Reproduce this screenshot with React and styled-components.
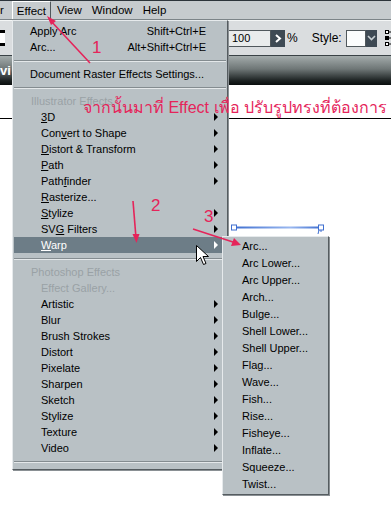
import React from "react";
import styled, { createGlobalStyle } from "styled-components";

const GlobalStyle = createGlobalStyle`
  html, body {
    margin: 0;
    padding: 0;
    background: #ffffff;
  }
  body {
    font-family: "Liberation Sans", Arial, sans-serif;
  }
`;

const Page = styled.div`
  position: relative;
  width: 391px;
  height: 513px;
  overflow: hidden;
  background: #ffffff;
  display: flex;
  flex-direction: column;
`;

const MenuBar = styled.div`
  height: 18px;
  border-top: 1px solid #2c343a;
  border-bottom: 1px solid #7c8488;
  background: #c6cbce;
  display: flex;
  align-items: center;
  font-size: 11.5px;
  color: #000;
`;

const MenuBarItem = styled.div`
  height: 18px;
  display: flex;
  align-items: center;
  padding: 0 ${(p) => (p.active ? 4 : 0)}px;
  margin-left: ${(p) => p.ml || 0}px;
  box-sizing: border-box;
  border: ${(p) => (p.active ? "1px solid #ffffff" : "none")};
  border-right-color: #50585c;
  border-bottom: none;
`;

const Toolbar = styled.div`
  height: 34px;
  background: #dadddf;
  border-top: 1px solid #f4f6f6;
  border-bottom: 1px solid #3a4246;
  display: flex;
  align-items: center;
  font-size: 12px;
`;

const Swatch = styled.div`
  width: 10px;
  height: 16px;
  background: #000;
  display: flex;
  align-items: center;
  justify-content: flex-end;
  &::after {
    content: "";
    width: 5px;
    height: 10px;
    background: #fff;
  }
`;

const Controls = styled.div`
  margin-left: 222px;
  display: flex;
  align-items: center;
`;

const NumberBox = styled.div`
  width: 44px;
  height: 17px;
  box-sizing: border-box;
  border: 1px solid #50585c;
  background: #e9ecec;
  font-size: 11px;
  padding-left: 4px;
  display: flex;
  align-items: center;
`;

const DarkButton = styled.div`
  width: ${(p) => p.w}px;
  height: 17px;
  background: #3e4a54;
  display: flex;
  align-items: center;
  justify-content: center;
`;

const Label = styled.span`
  margin-left: ${(p) => p.ml}px;
  font-size: 12px;
`;

const WhiteBox = styled.div`
  margin-left: 4px;
  width: 20px;
  height: 17px;
  box-sizing: border-box;
  border: 1px solid #50585c;
  background: #fbfdfd;
`;

const ChainIcon = styled.svg`
  margin-left: 8px;
`;

const Band = styled.div`
  height: 29px;
  background: linear-gradient(#a4acac 0%, #6e7676 45%, #1c2222 85%, #0a0e0e 100%);
  display: flex;
  align-items: center;
  color: #fff;
  font-weight: bold;
  font-size: 13px;
`;

const Canvas = styled.div`
  flex: 1;
  background: #fff;
  padding-top: 33px;
`;

const Rule = styled.div`
  height: 1px;
  background: #000;
`;

/* menu */

const Menu = styled.div`
  position: absolute;
  left: 12px;
  top: 20px;
  width: 216px;
  box-sizing: border-box;
  background: #b9c1c5;
  border: 1px solid;
  border-color: #e6eaec #555c60 #555c60 #e6eaec;
  box-shadow: 1px 1px 0 #8a9094;
  padding: 2px 1px 2px;
  font-size: 11px;
  color: #000;
  display: flex;
  flex-direction: column;
`;

const SubMenu = styled(Menu)`
  left: 222px;
  top: 236px;
  width: 107px;
  padding: 0 1px 2px;
`;

const Row = styled.div`
  height: ${(p) => p.h || 16}px;
  display: flex;
  align-items: center;
  padding-left: ${(p) => p.indent}px;
  padding-right: 8px;
  background: ${(p) => (p.hot ? "#6d7d87" : "transparent")};
  color: ${(p) => (p.hot ? "#fff" : p.disabled ? "#99a1a5" : "#000")};
  white-space: nowrap;
`;

const ItemText = styled.span`
  flex: 1;
  u {
    text-decoration: underline;
    text-underline-offset: 1px;
  }
`;

const Shortcut = styled.span`
  margin-right: 12px;
`;

const Arrow = styled.span`
  width: 0;
  height: 0;
  border-top: 4px solid transparent;
  border-bottom: 4px solid transparent;
  border-left: 4px solid ${(p) => (p.hot ? "#fff" : "#000")};
`;

const Separator = styled.div`
  height: 11px;
  display: flex;
  align-items: center;
  &::after {
    content: "";
    flex: 1;
    height: 1px;
    background: #848c90;
    border-bottom: 1px solid #e4e8ea;
  }
`;

const Overlay = styled.svg`
  position: absolute;
  left: 0;
  top: 0;
  pointer-events: none;
`;

const Note = styled.div`
  position: absolute;
  left: ${(p) => p.x}px;
  top: ${(p) => p.y}px;
  color: #e5245a;
  font-family: "Liberation Sans", "DejaVu Sans", sans-serif;
  font-size: ${(p) => p.size || 16}px;
  white-space: nowrap;
`;

const illustrator = [
  [<><u>3</u>D</>, true],
  [<>Con<u>v</u>ert to Shape</>, true],
  [<><u>D</u>istort &amp; Transform</>, true],
  [<><u>P</u>ath</>, true],
  [<>Path<u>f</u>inder</>, true],
  [<><u>R</u>asterize...</>, false],
  [<><u>S</u>tylize</>, true],
  [<>SV<u>G</u> Filters</>, true],
];

const photoshop = [
  "Artistic",
  "Blur",
  "Brush Strokes",
  "Distort",
  "Pixelate",
  "Sharpen",
  "Sketch",
  "Stylize",
  "Texture",
  "Video",
];

const warps = [
  "Arc...",
  "Arc Lower...",
  "Arc Upper...",
  "Arch...",
  "Bulge...",
  "Shell Lower...",
  "Shell Upper...",
  "Flag...",
  "Wave...",
  "Fish...",
  "Rise...",
  "Fisheye...",
  "Inflate...",
  "Squeeze...",
  "Twist...",
];

const App = () => {
  return (
    <Page>
      <GlobalStyle />
      <MenuBar>
        <MenuBarItem>r</MenuBarItem>
        <MenuBarItem ml={8} active>
          Effect
        </MenuBarItem>
        <MenuBarItem ml={6}>View</MenuBarItem>
        <MenuBarItem ml={10}>Window</MenuBarItem>
        <MenuBarItem ml={10}>Help</MenuBarItem>
      </MenuBar>
      <Toolbar>
        <Swatch />
        <Controls>
          <NumberBox>100</NumberBox>
          <DarkButton w={14}>
            <svg width="8" height="9" viewBox="0 0 8 9">
              <path d="M2 1 L6 4.5 L2 8" stroke="#fff" strokeWidth="2" fill="none" />
            </svg>
          </DarkButton>
          <Label ml={2}>%</Label>
          <Label ml={14}>Style:</Label>
          <WhiteBox />
          <DarkButton w={11}>
            <svg width="9" height="6" viewBox="0 0 9 6">
              <path d="M1 1 L4.5 4.5 L8 1" stroke="#c8d0d4" strokeWidth="1.6" fill="none" />
            </svg>
          </DarkButton>
          <ChainIcon width="8" height="18" viewBox="0 0 8 18">
            <rect x="0.5" y="1.5" width="3" height="3" fill="#fff" stroke="#000" />
            <rect x="0.5" y="7.5" width="3" height="3" fill="#000" stroke="#000" />
            <rect x="0.5" y="13.5" width="3" height="3" fill="#fff" stroke="#000" />
            <path d="M3.5 3 H7 M3.5 9 H7 M3.5 15 H7" stroke="#000" />
          </ChainIcon>
        </Controls>
      </Toolbar>
      <Band>vi</Band>
      <Canvas>
        <Rule />
      </Canvas>

      <Menu>
        <Row indent={16}>
          <ItemText>Apply Arc</ItemText>
          <Shortcut>Shift+Ctrl+E</Shortcut>
        </Row>
        <Row indent={16}>
          <ItemText>Arc...</ItemText>
          <Shortcut>Alt+Shift+Ctrl+E</Shortcut>
        </Row>
        <Separator />
        <Row indent={16}>
          <ItemText>Document Raster Effects Settings...</ItemText>
        </Row>
        <Separator />
        <Row indent={17} disabled>
          <ItemText>Illustrator Effects</ItemText>
        </Row>
        {illustrator.map(([label, sub], i) => (
          <Row key={i} indent={27}>
            <ItemText>{label}</ItemText>
            {sub && <Arrow />}
          </Row>
        ))}
        <Row indent={27} hot>
          <ItemText>
            <u>W</u>arp
          </ItemText>
          <Arrow hot />
        </Row>
        <Separator />
        <Row indent={17} disabled>
          <ItemText>Photoshop Effects</ItemText>
        </Row>
        <Row indent={27} disabled>
          <ItemText>Effect Gallery...</ItemText>
        </Row>
        {photoshop.map((label) => (
          <Row key={label} indent={27}>
            <ItemText>{label}</ItemText>
            <Arrow />
          </Row>
        ))}
        <Separator />
      </Menu>

      <SubMenu>
        {warps.map((label) => (
          <Row key={label} indent={18} h={17}>
            <ItemText>{label}</ItemText>
          </Row>
        ))}
      </SubMenu>

      <Note x={83} y={95} size={16}>
        จากนั้นมาที่ Effect เพื่อ ปรับรูปทรงที่ต้องการ
      </Note>
      <Note x={92} y={38} size={17}>
        1
      </Note>
      <Note x={151} y={196} size={17}>
        2
      </Note>
      <Note x={204} y={207} size={17}>
        3
      </Note>

      <Overlay width="391" height="513" viewBox="0 0 391 513">
        <defs>
          <linearGradient id="sel" gradientUnits="userSpaceOnUse" x1="234" y1="0" x2="321" y2="0">
            <stop offset="0" stopColor="#3f6fd0" />
            <stop offset="0.65" stopColor="#9ab8f0" />
            <stop offset="1" stopColor="#3f6fd0" />
          </linearGradient>
        </defs>
        {/* selected path */}
        <rect x="234" y="226.5" width="87" height="2" fill="url(#sel)" />
        <rect x="231.5" y="225" width="5" height="5" fill="#fff" stroke="#3f6fd0" />
        <rect x="318.5" y="225" width="5" height="5" fill="#fff" stroke="#3f6fd0" />
        <path d="M319 230 L318 234 M321 230 L321 232" stroke="#3f6fd0" />

        {/* annotation arrows */}
        <g stroke="#e5245a" strokeWidth="1.6" fill="#e5245a">
          <line x1="90" y1="63" x2="50" y2="20" />
          <path d="M47 16 L56 21 L51 25 Z" stroke="none" />
          <line x1="133" y1="201" x2="136" y2="238" />
          <path d="M136.5 243 L132.5 234 L139.5 234 Z" stroke="none" />
          <line x1="193" y1="229" x2="236" y2="243" />
          <path d="M241 245 L231 246 L234 238 Z" stroke="none" />
        </g>

        {/* mouse cursor */}
        <path
          d="M196.5 245.5 L196.5 261.5 L200.5 257.5 L203.5 264.5 L206 263.5 L203 256.5 L208.5 256.5 Z"
          fill="#fff"
          stroke="#000"
          strokeWidth="1"
        />
      </Overlay>
    </Page>
  );
};

export default App;
